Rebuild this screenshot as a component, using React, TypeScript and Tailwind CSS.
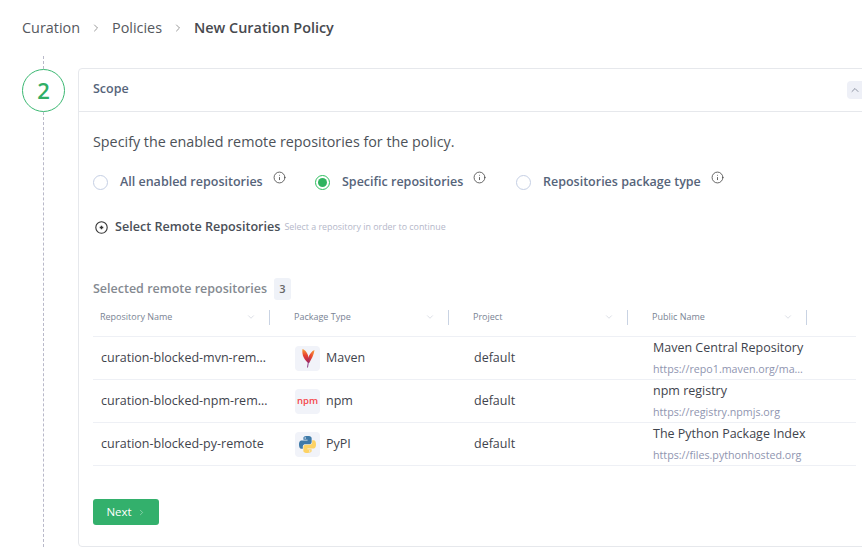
import { ChevronDown, ChevronRight, ChevronUp, Info } from 'lucide-react';

const COLUMNS = ['Repository Name', 'Package Type', 'Project', 'Public Name'];

const ROWS = [
  {
    name: 'curation-blocked-mvn-remote',
    type: 'Maven',
    title: 'Maven Central Repository',
    url: 'https://repo1.maven.org/maven2/',
  },
  { name: 'curation-blocked-npm-remote', type: 'npm', title: 'npm registry', url: 'https://registry.npmjs.org' },
  { name: 'curation-blocked-py-remote', type: 'PyPI', title: 'The Python Package Index', url: 'https://files.pythonhosted.org' },
];

function MavenIcon() {
  return (
    <svg width="14" height="20" viewBox="0 0 14 20">
      <defs>
        <linearGradient id="mvn-left" x1="0" y1="0" x2="0" y2="1">
          <stop offset="0" stopColor="#f7a13a" />
          <stop offset="0.45" stopColor="#e8442f" />
          <stop offset="1" stopColor="#a81f5c" />
        </linearGradient>
        <linearGradient id="mvn-right" x1="1" y1="0" x2="0" y2="1">
          <stop offset="0" stopColor="#f8a53c" />
          <stop offset="0.5" stopColor="#ea4a2f" />
          <stop offset="1" stopColor="#8c2470" />
        </linearGradient>
      </defs>
      <path d="M1.500 1C4.500 2 7 5.500 7.500 10L7.500 15C3.500 12.500 .5 7 1.500 1Z" fill="url(#mvn-left)" />
      <path d="M13.500 2C11 3 8.500 6 7 10L6.800 15 8.200 15C10.300 11 13 7 13.500 2Z" fill="url(#mvn-right)" />
      <path d="M7.300 14.500L6.500 19.500" stroke="#8c3f85" strokeWidth="1" fill="none" />
    </svg>
  );
}

function PythonIcon() {
  return (
    <svg width="17" height="17" viewBox="0 0 110 110">
      <path
        fill="#3f7aa8"
        d="M54.900 0C26.800 0 28.600 12.200 28.600 12.200v12.600h26.800v3.800H17.900S0 26.600 0 54.900c0 28.300 15.600 27.300 15.600 27.300h9.300V69.100s-.5-15.600 15.400-15.600h26.600s14.900.2 14.900-14.400V14.900S84.100 0 54.900 0zM40.200 8.500a4.800 4.800 0 1 1 0 9.600 4.800 4.800 0 0 1 0-9.600z"
      />
      <path
        fill="#fdd263"
        transform="rotate(180 55 55)"
        d="M54.900 0C26.800 0 28.600 12.200 28.600 12.200v12.600h26.800v3.800H17.900S0 26.600 0 54.900c0 28.300 15.600 27.300 15.600 27.300h9.300V69.100s-.5-15.600 15.400-15.600h26.600s14.900.2 14.900-14.400V14.900S84.100 0 54.900 0zM40.200 8.500a4.800 4.800 0 1 1 0 9.600 4.800 4.800 0 0 1 0-9.600z"
      />
    </svg>
  );
}

function PackageIcon({ type }: { type: string }) {
  return (
    <div className="flex h-[25px] w-[25px] items-center justify-center rounded-[4px] bg-[#f1f3f9]">
      {type === 'Maven' && <MavenIcon />}
      {type === 'npm' && <span className="text-[9.500px] leading-none font-semibold text-[#f5484a]">npm</span>}
      {type === 'PyPI' && <PythonIcon />}
    </div>
  );
}

function RadioOption({ label, checked, className }: { label: string; checked?: boolean; className: string }) {
  return (
    <div className={`flex items-center ${className}`}>
      {checked ? (
        <span className="flex h-[15px] w-[15px] items-center justify-center rounded-full border border-[#2fbf5f]">
          <span className="h-[9px] w-[9px] rounded-full bg-[#2fb35f]" />
        </span>
      ) : (
        <span className="h-[15px] w-[15px] rounded-full border border-[#c5cfe4]" />
      )}
      <span className="mt-[1px] ml-3 text-[12.500px] font-semibold whitespace-nowrap text-[#56647a]">{label}</span>
      <Info size={13} strokeWidth={1.5} className="mb-[10px] ml-[10px] text-[#444]" />
    </div>
  );
}

export default function App() {
  return (
    <div className="h-[547px] w-[862px] overflow-hidden bg-white font-['Open_Sans',sans-serif]">
      <div className="flex h-[56px] items-center pb-[1px] pl-[22px] text-[14.400px] text-[#55585e]">
        <span>Curation</span>
        <ChevronRight size={12} strokeWidth={1.5} className="mx-[10px] text-[#777]" />
        <span>Policies</span>
        <ChevronRight size={12} strokeWidth={1.5} className="mx-[10px] text-[#777]" />
        <span className="font-semibold text-[#47494e]">New Curation Policy</span>
      </div>

      <div className="flex pl-[22px]">
        <div className="flex w-[43px] shrink-0 flex-col items-center">
          <div className="h-[13px] border-l border-dashed border-[#b9b9c9]" />
          <div className="flex h-[43px] w-[43px] items-center justify-center rounded-full border border-[#3bb872] text-[22px] font-semibold text-[#2fae66]">
            2
          </div>
          <div className="h-[435px] border-l border-dashed border-[#b9b9c9]" />
        </div>

        <div className="mt-[12px] ml-[13px] h-[479px] w-[800px] shrink-0 rounded-[4px] border border-[#e6e8ec]">
          <div className="flex h-[43px] items-center justify-between border-b border-[#e6e8ec] pl-[14px]">
            <span className="mb-[2px] text-[12.500px] font-semibold text-[#56647a]">Scope</span>
            <div className="flex h-[18px] w-[30px] items-center rounded-[4px] bg-[#eef0f7] pl-[2px]">
              <ChevronUp size={12} strokeWidth={1.5} className="text-[#6d7686]" />
            </div>
          </div>

          <div className="pt-[20px] pl-[14px]">
            <p className="text-[14.340px] leading-[20px] text-[#4d5259]">Specify the enabled remote repositories for the policy.</p>

            <div className="mt-[20px] flex h-[20px] items-center">
              <RadioOption label="All enabled repositories" className="w-[222px]" />
              <RadioOption label="Specific repositories" checked className="w-[201px]" />
              <RadioOption label="Repositories package type" className="" />
            </div>

            <div className="mt-[25px] flex h-[20px] items-center">
              <svg width="13" height="13" viewBox="0 0 13 13" className="mt-[1px] ml-[2px] text-[#333]">
                <circle cx="6.500" cy="6.500" r="5.700" fill="none" stroke="currentColor" strokeWidth="1.100" />
                <path d="M6.500 4.700v3.600M4.700 6.500h3.600" stroke="currentColor" strokeWidth="1.400" />
              </svg>
              <span className="ml-[7px] text-[12.600px] font-semibold text-[#4a4f58]">Select Remote Repositories</span>
              <span className="ml-[4px] text-[8.900px] text-[#b4b7c9]">Select a repository in order to continue</span>
            </div>

            <div className="mt-[42px] flex h-[20px] items-center">
              <span className="text-[12.500px] font-semibold text-[#858a91]">Selected remote repositories</span>
              <span className="ml-[7px] flex h-[22px] w-[17px] items-center justify-center rounded-[3px] bg-[#eff2f8] text-[11px] font-semibold text-[#666]">
                3
              </span>
            </div>

            <div className="w-[763px]">
              <div className="grid h-[38px] grid-cols-[177px_179px_179px_179px_1fr] items-center border-b border-[#eef0f5] pb-[1px]">
                {COLUMNS.map((col, i) => (
                  <div
                    key={col}
                    className={`flex h-[15px] items-center justify-between border-r border-[#c9d3e3] pr-[13px] ${i === 0 ? 'pl-[7px]' : 'pl-[24px]'}`}
                  >
                    <span className="text-[9px] text-[#7a8494]">{col}</span>
                    <ChevronDown size={10} strokeWidth={1} className="text-[#aab2c2]" />
                  </div>
                ))}
              </div>

              {ROWS.map((row) => (
                <div
                  key={row.name}
                  className="grid h-[43px] grid-cols-[177px_179px_179px_179px_1fr] items-center border-b border-[#eef0f5] text-[12.500px] text-[#3f444d]"
                >
                  <div className="truncate pr-[1px] pl-[8px]">{row.name}</div>
                  <div className="flex items-center pl-[25px]">
                    <PackageIcon type={row.type} />
                    <span className="ml-[6px]">{row.type}</span>
                  </div>
                  <div className="pl-[25px]">default</div>
                  <div className="min-w-0 pb-[2px] pl-[25px]">
                    <div className="leading-[18px] whitespace-nowrap">{row.title}</div>
                    <div className="mt-[5px] truncate text-[10.700px] leading-[14px] text-[#8f95b0]">{row.url}</div>
                  </div>
                </div>
              ))}
            </div>

            <button className="mt-[33px] flex h-[26px] w-[66px] items-center justify-center rounded-[3px] bg-[#33b06c] text-[11.500px] font-medium text-white">
              Next
              <ChevronRight size={9} strokeWidth={1} className="ml-[5px]" />
            </button>
          </div>
        </div>
      </div>
    </div>
  );
}
